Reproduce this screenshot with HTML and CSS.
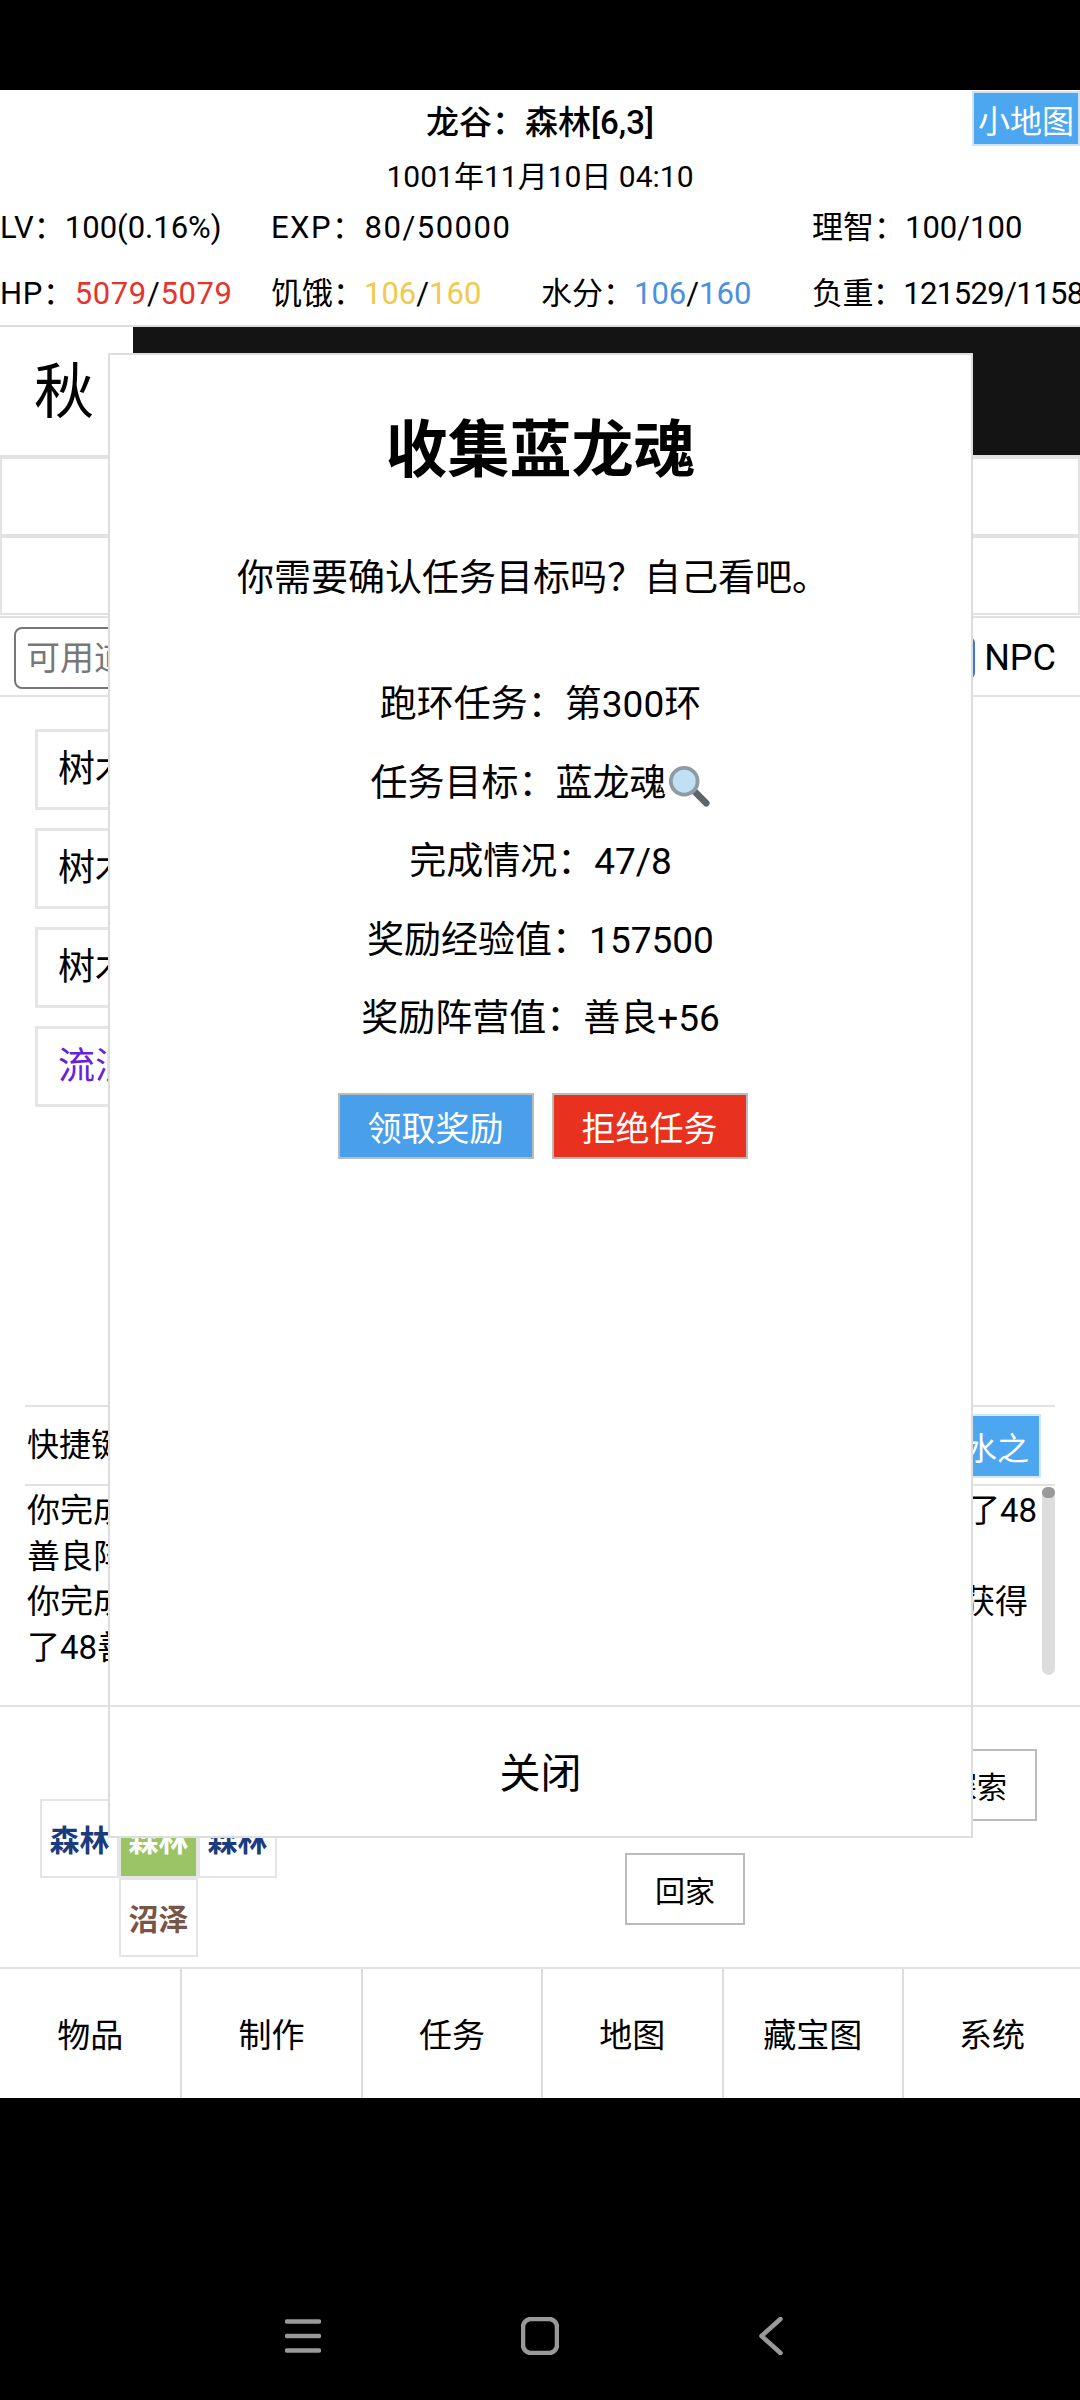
FILE: index.html
```html
<!DOCTYPE html>
<html lang="zh">
<head>
<meta charset="utf-8">
<title>龙谷</title>
<link rel="stylesheet" href="styles.css">
</head>
<body>
<div class="statusbar"></div>
<main class="app">
  <header class="head">
    <div class="place">龙谷：森林[6,3]</div>
    <button class="minimap">小地图</button>
    <div class="date">1001年11月10日 04:10</div>
  </header>
  <section class="stats">
    <span>LV：100(0.16%)</span><span class="exp">EXP：80/50000</span><span></span><span>理智：100/100</span>
    <span class="r2 hp">HP：<b class="red">5079</b>/<b class="red">5079</b></span>
    <span class="r2">饥饿：<b class="yellow">106</b>/<b class="yellow">160</b></span>
    <span class="r2">水分：<b class="blue">106</b>/<b class="blue">160</b></span>
    <span class="r2 load">负重：121529/1158</span>
  </section>
  <section class="weather">
    <div class="season">秋</div>
    <div class="sky"></div>
  </section>
  <div class="bar"></div>
  <div class="bar"></div>
  <section class="filter">
    <input class="search" placeholder="可用道具" readonly>
    <label class="npc"><span class="tick"></span>NPC</label>
  </section>
  <section class="list">
    <div class="item">树木</div>
    <div class="item">树木</div>
    <div class="item">树木</div>
    <div class="item purple">流浪者</div>
  </section>
  <section class="shortcut">
    <span class="shortcut-label">快捷键</span>
    <button class="quick">喝水之</button>
  </section>
  <section class="log">
    <div class="log-text">
      <p><span>你完成了任务</span><span>了48</span></p>
      <p><span>善良阵营</span></p>
      <p class="log-inset"><span>你完成了任务</span><span>获得</span></p>
      <p><span>了48善良</span></p>
    </div>
    <div class="scrollbar"><div class="thumb"></div></div>
  </section>
  <section class="field">
    <div class="map">
      <div class="cell"></div>
      <div class="cell"></div>
      <div class="cell"></div>
      <div class="cell forest">森林</div>
      <div class="cell here">森林</div>
      <div class="cell forest">森林</div>
      <div class="cell"></div>
      <div class="cell swamp">沼泽</div>
      <div class="cell"></div>
    </div>
    <div class="actions">
      <button class="act act-home">回家</button>
      <button class="act act-search">探索</button>
    </div>
  </section>
  <nav class="tabs">
    <div class="tab">物品</div>
    <div class="tab">制作</div>
    <div class="tab">任务</div>
    <div class="tab">地图</div>
    <div class="tab">藏宝图</div>
    <div class="tab">系统</div>
  </nav>
</main>
<footer class="sysnav">
  <svg class="sys" width="36" height="38" viewBox="0 0 36 38"><path d="M2 4.500H34M2 19H34M2 33.500H34"/></svg>
  <svg class="sys" width="38" height="38" viewBox="0 0 38 38"><rect x="2" y="2" width="34" height="34" rx="8"/></svg>
  <svg class="sys" width="24" height="38" viewBox="0 0 24 38"><path d="M21.500 2L2.500 19L21.500 36"/></svg>
</footer>
<div class="dialog">
  <h1 class="dialog-title">收集蓝龙魂</h1>
  <p class="dialog-intro">你需要确认任务目标吗？自己看吧。</p>
  <div class="dialog-rows">
    <p>跑环任务：第300环</p>
    <p>任务目标：蓝龙魂<svg class="lens" width="44" height="44" viewBox="0 0 46 46"><path class="lens-handle" d="M29 29L41 41"/><circle class="lens-glass" cx="18" cy="18" r="14"/></svg></p>
    <p>完成情况：47/8</p>
    <p>奖励经验值：157500</p>
    <p>奖励阵营值：善良+56</p>
  </div>
  <div class="dialog-btns">
    <button class="dbtn dbtn-ok">领取奖励</button>
    <button class="dbtn dbtn-no">拒绝任务</button>
  </div>
  <button class="dialog-close">关闭</button>
</div>
</body>
</html>
```
FILE: styles.css
```css
* { box-sizing: border-box; }
html, body { margin: 0; padding: 0; }
body {
  width: 1080px; height: 2400px; background: #000; color: #000; overflow: hidden;
  font-family: Roboto, "Noto Sans CJK SC", sans-serif; font-size: 32px; position: relative;
}
button { font-family: inherit; color: inherit; padding: 0; background: #fff; }
p, h1 { margin: 0; }
.statusbar { height: 90px; background: #000; }
.app { height: 2008px; background: #fff; display: flex; flex-direction: column; }
.head { height: 112px; position: relative; text-align: center; }
.place { font-size: 33px; font-weight: 500; line-height: 40px; padding-top: 13px; height: 62px; }
.date { font-size: 30px; line-height: 50px; }
.minimap {
  position: absolute; top: 1px; right: 0; width: 108px; height: 55px;
  background: #4da6f0; color: #fff; font-size: 32px; border: 2px solid #cfe3f5; white-space: nowrap;
}
.stats {
  display: grid; grid-template-columns: 271px 270px 271px 268px; grid-template-rows: 52px 71px;
  font-size: 31px; white-space: nowrap; height: 123px;
}
.stats span { line-height: 44px; padding-top: 4px; }
.stats .r2 { padding-top: 18px; }
.stats b { font-weight: 400; }
.exp { letter-spacing: 1.500px; }
.hp { letter-spacing: 0.650px; }
.load { letter-spacing: -0.600px; }
.red { color: #e5342c; } .yellow { color: #f2c94c; } .blue { color: #4a90e2; }
.weather { display: flex; height: 132px; border-top: 2px solid #ddd; border-bottom: 2px solid #e2e2e2; }
.season { width: 133px; font-size: 60px; padding-left: 34px; line-height: 132px; }
.sky { flex: 1; background: #141414; }
.bar { height: 79px; border: 2px solid #e2e2e2; }
.filter {
  height: 81px; margin-top: 1px; border-top: 2px solid #e2e2e2; border-bottom: 2px solid #e2e2e2;
  display: flex; justify-content: space-between; align-items: center; padding: 3px 24px 0 14px;
}
.search {
  width: 300px; height: 62px; border: 2px solid #777; border-radius: 8px; padding: 0 10px;
  font: inherit; font-size: 34px;
}
.search::placeholder { color: #777; }
.npc { display: flex; align-items: center; font-size: 36px; gap: 9px; }
.tick { width: 42px; height: 42px; background: #3f74e0; border-radius: 6px; }
.list { height: 708px; padding: 32px 0 0 35px; display: flex; flex-direction: column; gap: 18px; }
.item { width: 300px; height: 81px; border: 3px solid #e5e5e5; padding-left: 20px; font-size: 37px; line-height: 76px; }
.purple { color: #6a1fd8; }
.shortcut {
  margin: 0 25px; height: 81px; border-top: 2px solid #e2e2e2; border-bottom: 2px solid #e2e2e2;
  display: flex; justify-content: space-between; align-items: center; padding: 0 14px 0 2px;
}
.shortcut-label { margin-bottom: 8px; }
.quick { width: 120px; height: 64px; background: #4da6f0; color: #fff; border: 2px solid #d5e6f5; font-size: 32px; }
.log { height: 219px; margin: 0 25px; display: flex; padding-top: 1px; }
.log-text { flex: 1; padding: 1px 5px 0 2px; font-size: 33px; line-height: 46px; }
.log-text p { display: flex; justify-content: space-between; height: 45.500px; }
.log-text .log-inset { padding-right: 9px; }
.scrollbar { width: 13px; height: 188px; background: #ddd; border-radius: 7px; }
.thumb { height: 11px; background: #999; border-radius: 6px; }
.field { height: 262px; border-top: 2px solid #e2e2e2; position: relative; padding: 13px 43px 0 40px; display: flex; justify-content: space-between; }
.map { display: grid; grid-template-columns: repeat(3, 79px); grid-template-rows: repeat(3, 79px); }
.cell { font-size: 30px; font-weight: 700; text-align: center; line-height: 80px; }
.forest { border: 2px solid #e5e5e5; color: #1a3b7c; }
.here { background: #9bc565; color: #fff; border: 2px solid #e5e5e5; }
.swamp { border: 2px solid #e5e5e5; color: #795548; }
.actions { display: flex; flex-direction: column; align-items: flex-end; position: relative; }
.act { width: 120px; height: 72px; border: 2px solid #bbb; font-size: 30px; }
.act-search { position: absolute; top: 29px; right: 0; }
.act-home { position: absolute; top: 133px; right: 292px; }
.tabs { height: 131px; display: grid; grid-template-columns: repeat(5, 180.400px) 1fr; border-top: 2px solid #e2e2e2; }
.tab { border-left: 2px solid #ddd; display: flex; align-items: center; justify-content: center; font-size: 33px; padding-bottom: 2px; }
.tab:first-child { border-left: 0; }
.sysnav { height: 302px; padding: 219px 297px 0 285px; display: flex; justify-content: space-between; align-items: flex-start; }
.sys { fill: none; stroke: #999; stroke-width: 4.500px; stroke-linecap: round; stroke-linejoin: round; }
.dialog {
  position: absolute; left: 108px; top: 353px; width: 865px; height: 1485px; background: #fff;
  border: 2px solid #ddd; text-align: center; display: flex; flex-direction: column;
}
.dialog-title { font-size: 62px; font-weight: 700; line-height: 88px; margin-top: 52px; }
.dialog-intro { font-size: 37px; line-height: 50px; margin-top: 59px; padding-right: 15px; }
.dialog-rows { margin-top: 76px; font-size: 37px; line-height: 50px; display: flex; flex-direction: column; gap: 28.500px; }
.dialog-rows p { display: flex; justify-content: center; align-items: center; height: 50px; }
.lens { margin-left: 0; margin-top: 4px; }
.lens-glass { fill: #bfe0f5; stroke: #8f9aa3; stroke-width: 4px; }
.lens-handle { stroke: #5f6468; stroke-width: 7px; stroke-linecap: round; }
.dialog-btns { display: flex; justify-content: center; gap: 18px; margin-top: 49px; padding-left: 4px; }
.dbtn { width: 196px; height: 66px; color: #fff; border: 2px solid #bbb; font-size: 34px; }
.dbtn-ok { background: #4a9fea; }
.dbtn-no { background: #e8321f; }
.dialog-close {
  margin-top: auto; height: 131px; border: 0; border-top: 2px solid #e2e2e2; font-size: 41px; width: 100%; padding-bottom: 3px;
}
```
